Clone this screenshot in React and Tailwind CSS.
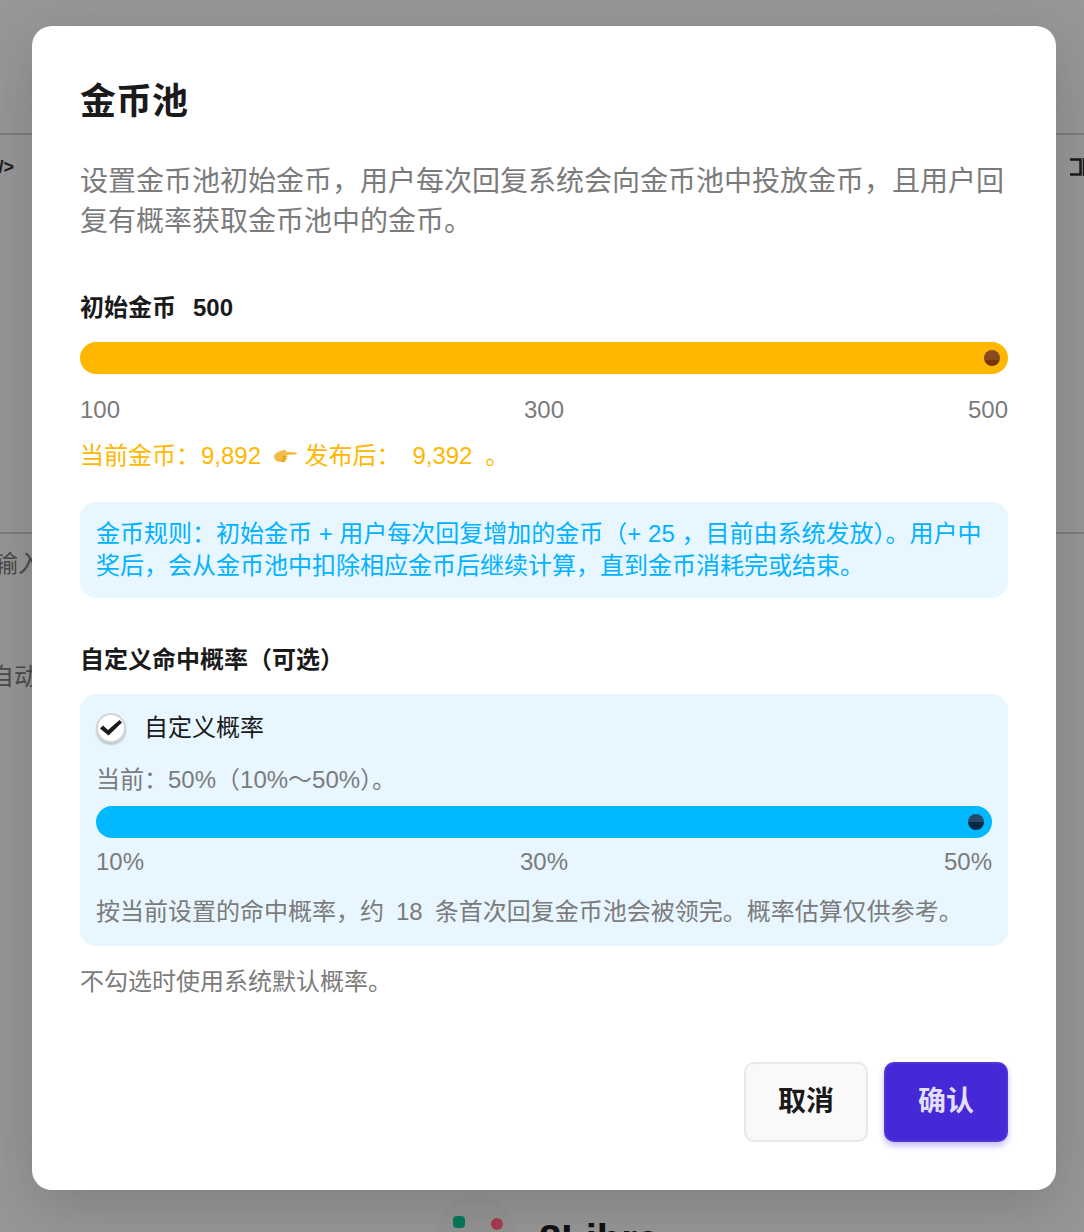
import React from "react";

const font = "font-['Liberation_Sans','Noto_Sans_CJK_SC',sans-serif]";

const HandIcon = () => (
  <svg width="25" height="18" viewBox="0 0 26 18" className="inline-block align-[-2px]">
    <path
      d="M1 9.500c0-3.500 3-5.500 6-6.500l5-1.500c1.200-.3 2 .8 1.300 2l8.200.5c1.500 0 3.500.4 3.500 1.300s-2 1.200-3.500 1.200l-7 .4c.5 1 .6 2 0 3 .3 1-.2 2-1 2.400 0 1-1 1.700-2 1.700H6.500c-3 0-5.500-2.500-5.500-6z"
      fill="#f4bb45"
    />
    <path d="M13 8.500l-3 .5M12.500 11l-3 .3M11.500 13.500l-2.500.2" stroke="#c48a26" strokeWidth="1" fill="none" />
  </svg>
);

const CheckMark = () => (
  <svg width="22" height="16" viewBox="0 0 22 16">
    <path d="M0 8.500L3 5.500L8 10L19.500 0L22 2.500L8.500 15.500Z" fill="#1a1a1a" />
  </svg>
);

const EdgeIcon = () => (
  <svg width="14" height="18" viewBox="0 0 14 18" className="mt-[7px]">
    <path d="M0 1.500h10.500v15H0" stroke="#1a1a1a" strokeWidth="2.500" fill="none" />
    <path d="M13.500 0v18" stroke="#1a1a1a" strokeWidth="1.500" />
  </svg>
);

const Slider = ({ track, thumb }) => (
  <div className={`flex h-8 items-center justify-end rounded-full pr-2 ${track}`}>
    <div className={`size-4 rounded-full ${thumb}`} />
  </div>
);

const Scale = ({ items, className }) => (
  <div className={`flex justify-between text-2xl leading-8 text-[#7b7b7b] ${className}`}>
    {items.map((item) => (
      <span key={item}>{item}</span>
    ))}
  </div>
);

// what is left visible of the page behind the dialog
const PageBehind = () => (
  <div className="h-[1232px] overflow-hidden bg-[#979797] text-2xl text-[#4a4a4a]">
    <div className="h-[135px] border-b-2 border-[#7c7c7c]" />
    <div className="flex h-[399px] items-start justify-between border-b-2 border-[#7c7c7c] pt-4 font-bold text-[#1a1a1a]">
      <span className="-ml-3 text-lg leading-8">&lt;/&gt;</span>
      <EdgeIcon />
    </div>
    <div className="-ml-1.5 pt-[14px] leading-8">输入</div>
    <div className="-ml-2.5 pt-[81px] leading-8">自动</div>
    <div className="mt-[502px] flex justify-center pr-[118px]">
      <div className="flex items-start gap-6 pl-[130px]">
        <div className="flex size-[78px] shrink-0 items-start justify-center gap-[26px] rounded-full bg-[#949494] pt-[21px] pl-1">
          <span className="size-3 rounded-sm bg-[#067a5c]" />
          <span className="mt-0.5 size-3 rounded-full bg-[#a83c52]" />
        </div>
        <span className="pt-[16px] text-[40px] leading-[56px] font-bold text-[#111]">8Libra</span>
      </div>
    </div>
  </div>
);

export default function App() {
  return (
    <div className={`relative h-[1232px] overflow-hidden ${font}`}>
      <PageBehind />

      <div className="absolute top-[26px] left-8 h-[1164px] w-[1024px] rounded-[20px] bg-white px-12 pt-[49px] shadow-[0_16px_60px_rgba(0,0,0,0.16)]">
        <h2 className="text-[36px] leading-[54px] font-semibold text-[#1a1a1a]">金币池</h2>
        <p className="mt-[33px] text-[28px] leading-10 text-[#7b7b7b]">
          设置金币池初始金币，用户每次回复系统会向金币池中投放金币，且用户回复有概率获取金币池中的金币。
        </p>

        <div className="mt-[50px] text-2xl leading-8 font-semibold text-[#1a1a1a]">
          初始金币<span className="ml-[17px]">500</span>
        </div>
        <div className="mt-[18px]">
          <Slider track="bg-[#ffb700]" thumb="bg-[linear-gradient(#8a4a22_60%,#7a3706_60%)]" />
        </div>
        <Scale items={["100", "300", "500"]} className="mt-5" />
        <div className="mt-3.5 text-2xl leading-8 text-[#ffb700]">
          当前金币：<span className="mr-[5px] ml-px">9,892</span> <HandIcon /> 发布后：
          <span className="mr-1.5 ml-3">9,392</span> 。
        </div>

        <div className="mt-[30px] rounded-2xl bg-[#e8f6ff] p-4 text-2xl leading-8 text-[#00b2ff]">
          金币规则：初始金币 + 用户每次回复增加的金币（+ 25 <span>，</span>
          目前由系统发放）。用户中奖后，会从金币池中扣除相应金币后继续计算，直到金币消耗完或结束。
        </div>

        <div className="mt-[46px] text-2xl leading-8 font-semibold text-[#1a1a1a]">
          自定义命中概率（可选）
        </div>

        <div className="mt-[18px] rounded-2xl bg-[#e8f6ff] px-4 pt-[18px] pb-[18px]">
          <div className="flex items-center gap-[18px] text-2xl leading-8 text-[#1a1a1a]">
            <span className="flex size-[30px] items-center justify-center rounded-full border-2 border-[#d5d5d5] bg-white shadow-[0_2px_2px_rgba(0,0,0,0.2)]">
              <CheckMark />
            </span>
            自定义概率
          </div>
          <div className="mt-5 text-2xl leading-8 text-[#7b7b7b]">当前：50%（10%～50%）。</div>
          <div className="mt-2.5">
            <Slider track="bg-[#00b8ff]" thumb="bg-[linear-gradient(#28496b_50%,#062a48_50%)]" />
          </div>
          <Scale items={["10%", "30%", "50%"]} className="mt-2" />
          <div className="mt-[18px] text-2xl leading-8 text-[#7b7b7b]">
            按当前设置的命中概率，约<span className="mx-3">18</span>条首次回复金币池会被领完。概率估算仅供参考。
          </div>
        </div>

        <div className="mt-5 text-2xl leading-8 text-[#7b7b7b]">不勾选时使用系统默认概率。</div>

        <div className="mt-[64px] flex justify-end gap-4">
          <button className="h-20 w-[124px] rounded-[10px] border-2 border-[#e8e8e8] bg-[#f9f9f9] text-[28px] font-semibold text-[#1a1a1a]">
            取消
          </button>
          <button className="h-20 w-[124px] rounded-[10px] border-2 border-[#4f35d8] bg-[#4429d6] text-[28px] font-semibold text-[#e3defc] shadow-[0_4px_6px_rgba(68,41,214,0.3)]">
            确认
          </button>
        </div>
      </div>
    </div>
  );
}
